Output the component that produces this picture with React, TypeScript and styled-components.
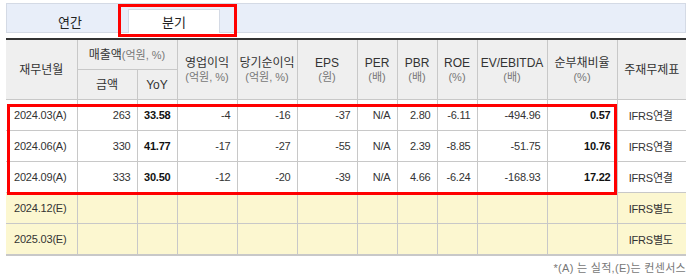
import React from "react";
import styled, { createGlobalStyle } from "styled-components";

const Global = createGlobalStyle`
  html, body { margin: 0; padding: 0; background: #fff; }
  body { font-family: "Liberation Sans", "Noto Sans CJK KR", sans-serif; color: #333; }
`;

const Page = styled.div`
  position: relative;
  width: 680px;
  padding: 3px 0 0 6px;
`;

const TabBar = styled.div`
  box-sizing: border-box;
  height: 30px;
  background: #e8eef9;
  border: 1px solid #d4dae5;
  display: flex;
  align-items: flex-end;
  padding-left: 17px;
  gap: 12px;
`;

const Tab = styled.div<{ $active?: boolean }>`
  box-sizing: border-box;
  width: 92px;
  height: 24px;
  display: flex;
  align-items: center;
  justify-content: center;
  font-size: 13px;
  color: #222;
  background: ${(p) => (p.$active ? "#fff" : "transparent")};
  border: 1px solid ${(p) => (p.$active ? "#d4dae5" : "transparent")};
  border-bottom: none;
  margin-bottom: -1px;
  padding-bottom: 1px;
`;

const Table = styled.table`
  margin-top: 5px;
  width: 680px;
  border-collapse: collapse;
  table-layout: fixed;
  border-top: 2px solid #333;
  border-bottom: 2px solid #c8c8c8;
  font-size: 11px;
`;

const Th = styled.th`
  background: #efefef;
  font-weight: normal;
  font-size: 12px;
  color: #333;
  border: 1px solid #c8c8c8;
  height: 29px;
  padding: 0;
  text-align: center;
  line-height: 14px;
  &:first-child { border-left: none; }
  &:last-child { border-right: none; }
`;

const Sub = styled.span`
  color: #777;
  font-size: 11px;
`;

const Td = styled.td<{ $left?: boolean; $bold?: boolean; $est?: boolean }>`
  border: 1px solid #c8c8c8;
  height: 30px;
  padding: 0 6px 0 4px;
  text-align: ${(p) => (p.$left ? "center" : "right")};
  font-weight: ${(p) => (p.$bold ? "bold" : "normal")};
  color: ${(p) => (p.$bold ? "#111" : "#333")};
  background: ${(p) => (p.$est ? "#fcf7d0" : "#fff")};
  white-space: nowrap;
  letter-spacing: -0.2px;
  &:first-child { border-left: none; }
  &:last-child { border-right: none; }
`;

const Note = styled.div`
  text-align: right;
  font-size: 11px;
  color: #777;
  margin-top: 3px;
  letter-spacing: 0.3px;
`;

const Highlight = styled.div`
  position: absolute;
  box-sizing: border-box;
  border: 3px solid #ff0000;
  pointer-events: none;
`;

const widths = [71, 60, 40, 60, 60, 60, 40, 40, 40, 70, 70, 69];

type Row = { d: string; v: string[]; est?: boolean; fs: string };
const rows: Row[] = [
  { d: "2024.03(A)", v: ["263", "33.58", "-4", "-16", "-37", "N/A", "2.80", "-6.11", "-494.96", "0.57"], fs: "IFRS연결" },
  { d: "2024.06(A)", v: ["330", "41.77", "-17", "-27", "-55", "N/A", "2.39", "-8.85", "-51.75", "10.76"], fs: "IFRS연결" },
  { d: "2024.09(A)", v: ["333", "30.50", "-12", "-20", "-39", "N/A", "4.66", "-6.24", "-168.93", "17.22"], fs: "IFRS연결" },
  { d: "2024.12(E)", v: ["", "", "", "", "", "", "", "", "", ""], fs: "IFRS별도", est: true },
  { d: "2025.03(E)", v: ["", "", "", "", "", "", "", "", "", ""], fs: "IFRS별도", est: true },
];

const boldCols = new Set([1, 9]);

export default function App() {
  return (
    <>
      <Global />
      <Page>
        <TabBar>
          <Tab>연간</Tab>
          <Tab $active>분기</Tab>
        </TabBar>
        <Table>
          <colgroup>
            {widths.map((w, i) => (
              <col key={i} style={{ width: w }} />
            ))}
          </colgroup>
          <thead>
            <tr>
              <Th rowSpan={2}>재무년월</Th>
              <Th colSpan={2}>
                매출액<Sub>(억원, %)</Sub>
              </Th>
              <Th rowSpan={2}>
                영업이익<br />
                <Sub>(억원, %)</Sub>
              </Th>
              <Th rowSpan={2}>
                당기순이익<br />
                <Sub>(억원, %)</Sub>
              </Th>
              <Th rowSpan={2}>
                EPS<br />
                <Sub>(원)</Sub>
              </Th>
              <Th rowSpan={2}>
                PER<br />
                <Sub>(배)</Sub>
              </Th>
              <Th rowSpan={2}>
                PBR<br />
                <Sub>(배)</Sub>
              </Th>
              <Th rowSpan={2}>
                ROE<br />
                <Sub>(%)</Sub>
              </Th>
              <Th rowSpan={2}>
                EV/EBITDA<br />
                <Sub>(배)</Sub>
              </Th>
              <Th rowSpan={2}>
                순부채비율<br />
                <Sub>(%)</Sub>
              </Th>
              <Th rowSpan={2}>주재무제표</Th>
            </tr>
            <tr>
              <Th>금액</Th>
              <Th>YoY</Th>
            </tr>
          </thead>
          <tbody>
            {rows.map((r) => (
              <tr key={r.d}>
                <Td $left $est={r.est}>{r.d}</Td>
                {r.v.map((v, i) => (
                  <Td key={i} $bold={boldCols.has(i)} $est={r.est}>
                    {v}
                  </Td>
                ))}
                <Td $left $est={r.est}>{r.fs}</Td>
              </tr>
            ))}
          </tbody>
        </Table>
        <Note>*(A) 는 실적,(E)는 컨센서스</Note>
        <Highlight style={{ left: 118, top: 4, width: 119, height: 33 }} />
        <Highlight style={{ left: 7, top: 104, width: 610, height: 91 }} />
      </Page>
    </>
  );
}
